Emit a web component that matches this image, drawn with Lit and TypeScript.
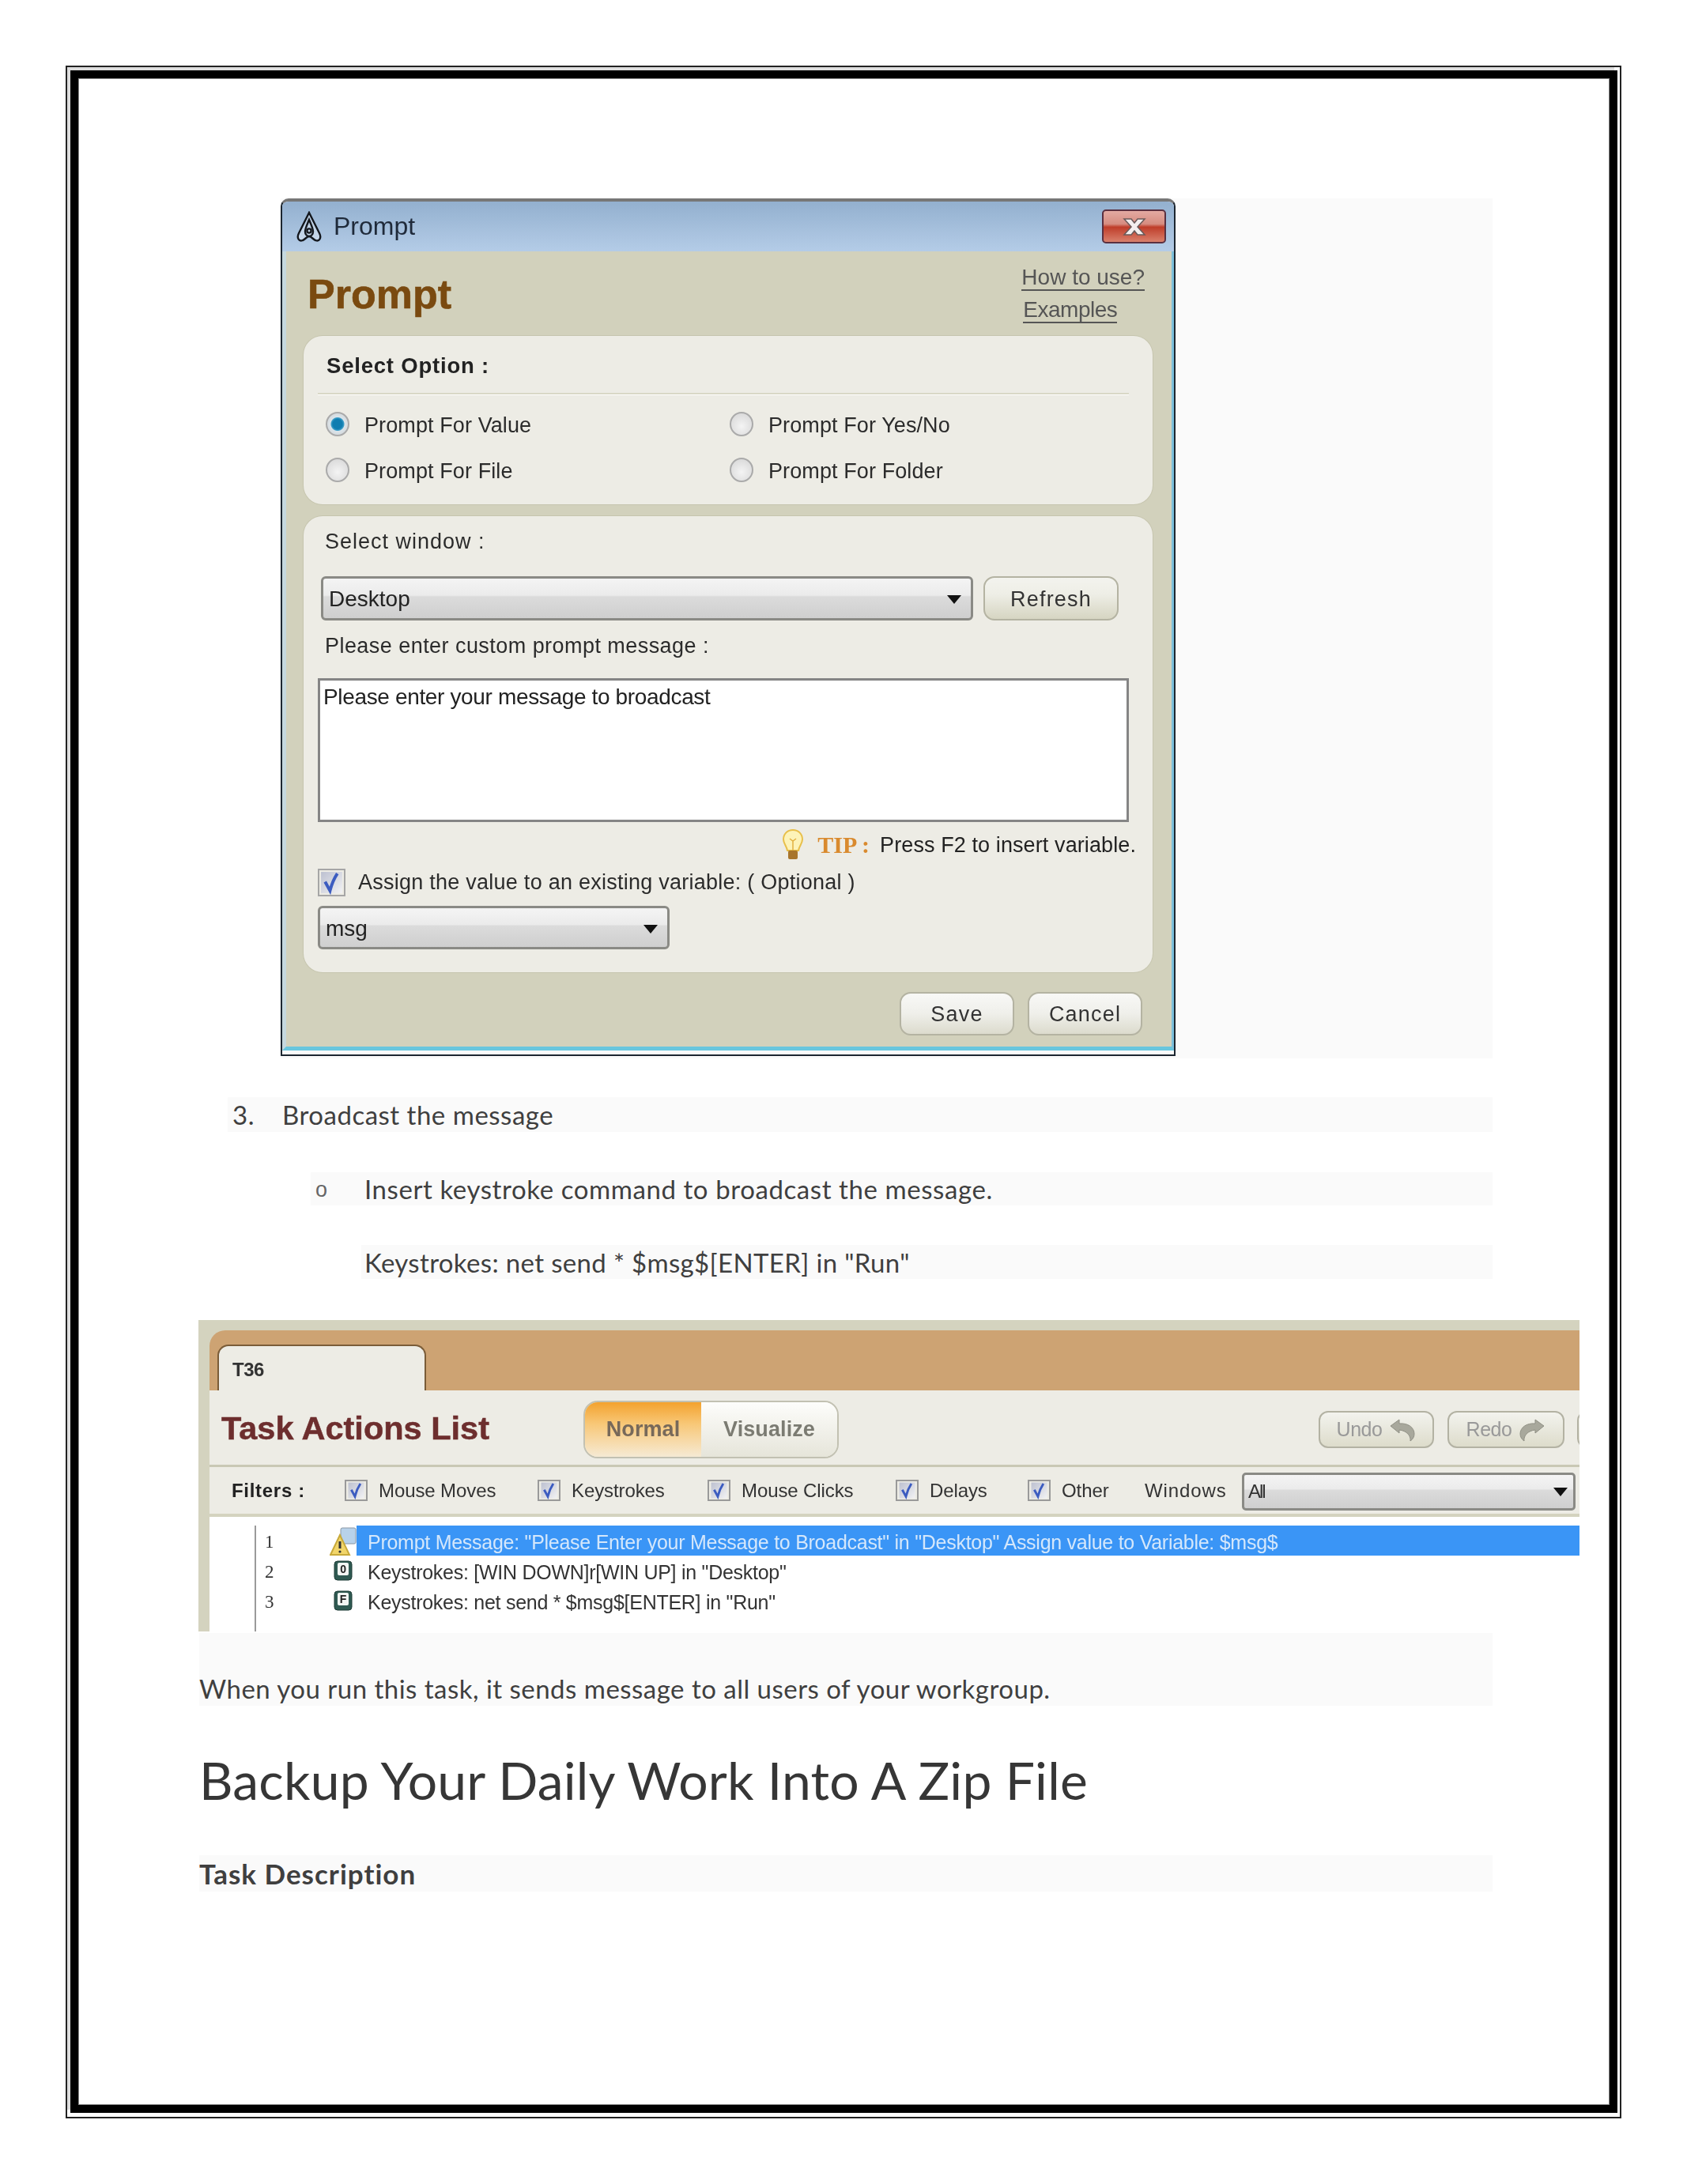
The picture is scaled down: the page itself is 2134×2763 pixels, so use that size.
import { LitElement, html, css, svg } from 'lit';
import { customElement } from 'lit/decorators.js';

const arrow = (cls = '') => html`<svg class="arrow ${cls}" width="18" height="12" viewBox="0 0 18 12"><path d="M0 1h18L9 12z" fill="#111"/></svg>`;

const checkMark = () => html`<svg class="check" width="100%" height="100%" viewBox="0 0 30 30">
  <defs><linearGradient id="cb" x1="0" y1="0" x2="1" y2="1"><stop offset="0" stop-color="#bcc0d0"/><stop offset="1" stop-color="#f2f2f4"/></linearGradient></defs>
  <rect x="2" y="2" width="26" height="26" fill="url(#cb)"/>
  <path d="M7 14l6 11c2-8 5-15 9-21" fill="none" stroke="#3c5cc0" stroke-width="3.8"/>
</svg>`;

@customElement('prompt-window')
class PromptWindow extends LitElement {
  static styles = css`
    :host { display: block; font-family: "Liberation Sans", Arial, sans-serif; color: #2b2b2b; filter: blur(0.55px); }
    .win { box-sizing: border-box; width: 1132px; height: 1085px; border: 2px solid #1c2630; border-top: 4px solid #777; border-radius: 10px 10px 0 0; overflow: hidden; }
    .titlebar { height: 63px; display: flex; align-items: center; background: linear-gradient(#93b0cf, #b4cce7); padding-left: 17px; font-size: 32px; color: #1f2a3a; }
    .titlebar svg.logo { margin-right: 14px; }
    .close { margin-left: auto; margin-right: 10px; width: 81px; height: 43px; box-sizing: border-box; border: 2px solid #5a3040; border-radius: 5px; background: linear-gradient(#e3aaa2 0%, #d68c80 42%, #bf3d2a 52%, #d9806c 100%); display: flex; align-items: center; justify-content: center; }
    .body { height: 1011px; box-sizing: border-box; background: #d2d1bc; border-left: 5px solid #c5d8de; border-right: 3px solid #7cc0dc; border-bottom: 5px solid #68c6de; }
    .head { height: 107px; display: flex; justify-content: space-between; padding: 0 34px 0 27px; box-sizing: border-box; }
    h1 { margin: 28px 0 0; font-size: 52px; line-height: 52px; font-weight: 700; color: #7a4a10; -webkit-text-stroke: 0.6px #7a4a10; }
    .links { padding-top: 18px; display: flex; flex-direction: column; align-items: flex-start; font-size: 28px; color: #555; }
    .links a { line-height: 30px; border-bottom: 2px solid #555; margin-bottom: 9px; }
    .links a.ex { margin-left: 2px; letter-spacing: -0.5px; }
    .panel { margin-left: 22px; width: 1074px; box-sizing: border-box; background: #edece5; border-radius: 24px; box-shadow: 0 0 0 1px #c6c5ae; }
    .p1 { height: 213px; }
    .p2 { height: 577px; margin-top: 15px; }
    .p1-title { height: 72px; box-sizing: border-box; padding: 20px 0 0 29px; font-size: 27.5px; line-height: 36px; font-weight: 700; letter-spacing: 0.8px; color: #222; }
    .sep { margin-left: 18px; width: 1026px; height: 2px; background: #d9d8c6; box-shadow: 0 1px 0 #fff; }
    .radios { display: grid; grid-template-columns: 511px 1fr; grid-auto-rows: 58px; padding: 8px 0 0 28px; }
    .radio { display: flex; align-items: center; font-size: 27px; letter-spacing: 0.1px; gap: 19px; }
    .radio span.t { padding-top: 5px; }
    .dot { width: 30px; height: 31px; border-radius: 50%; box-sizing: border-box; border: 2px solid #aaa; background: radial-gradient(circle at 50% 60%, #f4f4f4, #d4d4d4); }
    .dot.on { background: radial-gradient(circle, #0f7db0 0 6px, #3b9dc7 8px, #dbe4ea 9px, #cfcfcf 100%); }
    .lbl { height: 64px; display: flex; align-items: center; padding-left: 27px; font-size: 27px; }
    .lbl.sw { letter-spacing: 1px; margin-bottom: 12px; }
    .lbl.pm { letter-spacing: 0.45px; margin-bottom: 9px; }
    .sel-row { display: flex; padding-left: 22px; gap: 13px; height: 56px; }
    .select { box-sizing: border-box; border: 3px solid #8a8a85; border-radius: 6px; background: linear-gradient(#f4f4f4 0, #ebebeb 42%, #dbdbdb 46%, #cfcfcf 100%); display: flex; align-items: center; justify-content: space-between; padding: 2px 12px 0 7px; font-size: 28px; color: #222; }
    .sel-win { width: 825px; height: 56px; }
    .sel-msg { width: 445px; height: 55px; margin: 12px 0 0 18px; }
    .btn { box-sizing: border-box; border: 2px solid #b4b3a2; border-radius: 14px; display: flex; align-items: center; justify-content: center; padding-top: 2px; font-size: 27px; letter-spacing: 1.2px; color: #333; background: linear-gradient(#f3f3ee, #eeeee6 40%, #d6d5c2); }
    .refresh { width: 171px; height: 56px; }
    .text { margin-left: 18px; width: 1026px; height: 182px; box-sizing: border-box; background: #fff; border: 3px solid #858585; padding: 5px 4px; font-size: 28px; line-height: 32px; letter-spacing: -0.35px; color: #222; }
    .tip { height: 58px; display: flex; align-items: center; justify-content: flex-end; padding-right: 21px; font-size: 27px; letter-spacing: 0.1px; color: #222; }
    .tip b { color: #d98a2e; margin: 0 13px 0 18px; font-family: "Liberation Serif", serif; font-size: 30px; letter-spacing: 0; }
    .chk-row { display: flex; align-items: center; height: 35px; margin-left: 18px; gap: 16px; padding-top: 1px; font-size: 27px; letter-spacing: 0.25px; }
    .cb { width: 35px; height: 35px; box-sizing: border-box; border: 2px solid #a6a6a6; }
    .foot { display: flex; justify-content: flex-end; gap: 17px; padding: 25px 37px 0 0; }
    .foot .btn { width: 145px; height: 55px; background: linear-gradient(#f8f8f6, #efefea 50%, #dcdbcd); }
  `;

  radio(label: string, on = false) {
    return html`<div class="radio"><span class="dot ${on ? 'on' : ''}"></span><span class="t">${label}</span></div>`;
  }

  render() {
    return html`
      <div class="win">
        <div class="titlebar">
          <svg class="logo" width="34" height="40" viewBox="0 0 34 40" fill="none" stroke="#14181e" stroke-width="2.4">
            <path d="M17 2L4 28C1 34 4 39 9 37c3-1 5-5 8-5s5 4 8 5c5 2 8-3 5-9z" fill="#e4ebf3" fill-opacity="0.45"/>
            <path d="M17 11c-2 5-5 11-5 15 0 3 2 6 5 6s5-3 5-6c0-4-3-10-5-15z"/>
            <circle cx="17" cy="25" r="2.6"/>
          </svg>
          Prompt
          <div class="close">
            <svg width="34" height="26" viewBox="0 0 34 26"><path d="M4 3h9l4 5 4-5h9l-9 10 9 10h-9l-4-5-4 5H4l9-10z" fill="#f3eeee" stroke="#6a5a5a" stroke-width="1.5"/></svg>
          </div>
        </div>
        <div class="body">
          <div class="head">
            <h1>Prompt</h1>
            <div class="links"><a>How to use?</a><a class="ex">Examples</a></div>
          </div>
          <div class="panel p1">
            <div class="p1-title">Select Option :</div>
            <div class="sep"></div>
            <div class="radios">
              ${this.radio('Prompt For Value', true)}
              ${this.radio('Prompt For Yes/No')}
              ${this.radio('Prompt For File')}
              ${this.radio('Prompt For Folder')}
            </div>
          </div>
          <div class="panel p2">
            <div class="lbl sw">Select window :</div>
            <div class="sel-row">
              <div class="select sel-win">Desktop ${arrow()}</div>
              <div class="btn refresh">Refresh</div>
            </div>
            <div class="lbl pm">Please enter custom prompt message :</div>
            <div class="text">Please enter your message to broadcast</div>
            <div class="tip">
              <svg width="26" height="40" viewBox="0 0 26 40">
                <path d="M13 1C6 1 1 6 1 13c0 5 4 8 5 14h14c1-6 5-9 5-14 0-7-5-12-12-12z" fill="#fdf3b8" stroke="#e8bf4a" stroke-width="2"/>
                <path d="M13 27V14M9 12l4 3 4-3" fill="none" stroke="#e2b040" stroke-width="1.5"/>
                <rect x="7" y="27" width="12" height="11" rx="2" fill="#a8752c"/>
              </svg>
              <b>TIP :</b> Press F2 to insert variable.
            </div>
            <div class="chk-row"><span class="cb">${checkMark()}</span>Assign the value to an existing variable: ( Optional )</div>
            <div class="select sel-msg">msg ${arrow()}</div>
          </div>
          <div class="foot"><div class="btn">Save</div><div class="btn">Cancel</div></div>
        </div>
      </div>
    `;
  }
}

const filters = [
  { label: 'Mouse Moves', width: 244 },
  { label: 'Keystrokes', width: 215 },
  { label: 'Mouse Clicks', width: 238 },
  { label: 'Delays', width: 167 },
  { label: 'Other', width: 148 },
];

const rows = [
  { n: 1, text: 'Prompt Message: "Please Enter your Message to Broadcast" in "Desktop" Assign value to Variable: $msg$', sel: true },
  { n: 2, text: 'Keystrokes: [WIN DOWN]r[WIN UP] in "Desktop"', sel: false },
  { n: 3, text: 'Keystrokes: net send * $msg$[ENTER] in "Run"', sel: false },
];

@customElement('task-actions')
class TaskActions extends LitElement {
  static styles = css`
    :host { display: block; font-family: "Liberation Sans", Arial, sans-serif; color: #333; filter: blur(0.55px); }
    .shot { width: 1747px; height: 394px; box-sizing: border-box; background: #d4d3bf; padding: 13px 0 0 14px; overflow: hidden; }
    .tabs { height: 76px; box-sizing: border-box; background: #cda373; border-radius: 20px 0 0 0; padding: 18px 0 0 10px; }
    .tab { width: 264px; height: 58px; box-sizing: border-box; background: #edece5; border: 2px solid #7a5c38; border-bottom: 0; border-radius: 14px 14px 0 0; padding: 16px 0 0 17px; font-size: 24px; line-height: 28px; letter-spacing: -0.5px; font-weight: 700; color: #333; }
    .header { height: 97px; box-sizing: border-box; background: #edece5; border-bottom: 3px solid #c9c8b4; display: flex; align-items: center; padding-left: 15px; }
    h2 { margin: 2px 0 0; width: 458px; font-size: 41.5px; line-height: 48px; font-weight: 700; color: #6d2e2e; -webkit-text-stroke: 0.5px #6d2e2e; }
    .seg { width: 323px; height: 73px; margin-top: 5px; box-sizing: border-box; display: flex; border-radius: 18px; border: 2px solid #c2c1b2; overflow: hidden; font-weight: 700; font-size: 27px; letter-spacing: 0.1px; color: #7b7b72; }
    .seg div { display: flex; align-items: center; justify-content: center; }
    .seg .on { width: 147px; background: linear-gradient(#f3a22e, #f8c878 40%, #f6ead4); color: #77695a; }
    .seg .off { flex: 1; background: linear-gradient(#fdfdfb, #e6e5da); }
    .tool { box-sizing: border-box; height: 47px; margin-top: 5px; border: 2px solid #b3b2a3; border-radius: 12px; background: linear-gradient(#f3f3ee, #dddccb); display: flex; align-items: center; justify-content: center; gap: 9px; color: #999; font-size: 25px; letter-spacing: -0.5px; }
    .undo { width: 146px; margin-left: auto; }
    .redo { width: 148px; margin-left: 17px; }
    .stub { width: 20px; margin: 5px -17px 0 16px; border-radius: 12px 0 0 12px; }
    .filters { height: 63px; box-sizing: border-box; background: #edece5; border-bottom: 4px solid #d4d3bf; display: flex; align-items: center; padding-left: 28px; font-size: 24px; }
    .f-title { width: 143px; font-weight: 700; letter-spacing: 0.7px; color: #222; }
    .filter { display: flex; align-items: center; gap: 14px; letter-spacing: -0.1px; }
    .cb { width: 29px; height: 27px; box-sizing: border-box; border: 2px solid #9a9a9a; flex: none; }
    .win-lbl { width: 123px; letter-spacing: 0.9px; }
    .select { width: 422px; height: 48px; margin-top: 3px; box-sizing: border-box; border: 3px solid #8a8a85; border-radius: 5px; background: linear-gradient(#f4f4f4, #ebebeb 42%, #dbdbdb 46%, #cfcfcf); display: flex; align-items: center; justify-content: space-between; padding: 0 7px 0 5px; letter-spacing: -2px; }
    .list { height: 145px; background: #fff; box-sizing: border-box; padding: 11px 0 0 57px; }
    .rows { height: 134px; border-left: 2px solid #9a9a9a; }
    .row { display: flex; height: 38px; font-size: 25px; letter-spacing: -0.27px; }
    .num { width: 93px; padding: 8px 0 0 11px; box-sizing: border-box; font-family: "Liberation Serif", serif; font-size: 23px; letter-spacing: 0; color: #333; }
    .ico { width: 34px; display: flex; align-items: center; justify-content: center; }
    .txt { flex: 1; padding: 5px 0 0 14px; box-sizing: border-box; line-height: 32px; white-space: nowrap; }
    .sel { background: #3a95f6; color: #d4e7fb; }
  `;

  rowIcon(n: number) {
    if (n === 1) return html`<svg width="34" height="38" viewBox="0 0 34 38">
      <rect x="14" y="3" width="19" height="20" rx="2" fill="#b8d2ea" stroke="#8a97a5"/>
      <path d="M13 12L1 37h24z" fill="#f1d56a" stroke="#c8a93a" stroke-width="2"/>
      <path d="M13 20v9" stroke="#333" stroke-width="3"/><circle cx="13" cy="33" r="1.6" fill="#333"/></svg>`;
    return html`<svg width="24" height="26" viewBox="0 0 24 26">
      <rect x="1" y="1" width="22" height="24" rx="4" fill="#2f5a52" stroke="#1c3a35"/>
      <rect x="5" y="3" width="14" height="16" rx="2" fill="#f2f5f3"/>
      <text x="12" y="16" text-anchor="middle" font-size="14" font-weight="700" font-family="Liberation Sans" fill="#222">${n === 2 ? '0' : 'F'}</text></svg>`;
  }

  tool(d: string) {
    return svg`<svg width="34" height="30" viewBox="0 0 34 30"><path d="${d}" fill="#a8a89c" stroke="#8f8f84" stroke-width="1"/></svg>`;
  }

  render() {
    return html`
      <div class="shot">
        <div class="tabs"><div class="tab">T36</div></div>
        <div class="header">
          <h2>Task Actions List</h2>
          <div class="seg"><div class="on">Normal</div><div class="off">Visualize</div></div>
          <div class="tool undo">Undo ${this.tool('M2 10L13 2v5c11-1 19 5 19 13 0 4-2 7-5 9 1-7-5-13-14-14v4z')}</div>
          <div class="tool redo">Redo ${this.tool('M32 10L21 2v5C10 6 2 12 2 20c0 4 2 7 5 9-1-7 5-13 14-14v4z')}</div>
          <div class="tool stub"></div>
        </div>
        <div class="filters">
          <div class="f-title">Filters :</div>
          ${filters.map(f => html`<div class="filter" style="width:${f.width}px"><span class="cb">${checkMark()}</span>${f.label}</div>`)}
          <div class="win-lbl">Windows</div>
          <div class="select">All ${arrow()}</div>
        </div>
        <div class="list">
          <div class="rows">
            ${rows.map(r => html`<div class="row">
              <div class="num">${r.n}</div>
              <div class="ico">${this.rowIcon(r.n)}</div>
              <div class="txt ${r.sel ? 'sel' : ''}">${r.text}</div>
            </div>`)}
          </div>
        </div>
      </div>
    `;
  }
}

@customElement('app-root')
class AppRoot extends LitElement {
  static styles = css`
    :host { display: block; width: 2134px; height: 2763px; background: #fff; overflow: hidden; font-family: Lato, "Open Sans", sans-serif; color: #3f3f3f; }
    .outer { margin: 83px 0 0 83px; width: 1968px; height: 2597px; box-sizing: border-box; border: 2px solid #222; padding: 4px 3px 5px 4px; }
    .inner { height: 100%; box-sizing: border-box; border: 10px solid #000; box-shadow: -4px -4px 0 #ddd, inset 0 0 0 1px #888; padding: 152px 0 0 153px; }
    .doc { width: 1636px; }
    .img-band { margin-left: 103px; width: 1533px; height: 1088px; background: #fafafa; }
    .band { background: #fafafa; display: flex; align-items: center; font-size: 33px; letter-spacing: 0.5px; box-sizing: border-box; }
    .b1 { margin: 49px 0 0 36px; height: 44px; padding-left: 6px; }
    .b2 { margin: 51px 0 0 141px; height: 42px; padding-left: 6px; letter-spacing: 0.58px; }
    .b3 { margin: 50px 0 0 205px; height: 43px; padding-left: 4px; letter-spacing: 0.34px; }
    .mark { width: 63px; flex: none; }
    .b2 .mark { width: 62px; padding-top: 2px; font-family: "Liberation Sans", sans-serif; font-size: 27px; color: #666; }
    task-actions { margin: 52px 0 0 -1px; }
    .b4 { margin-top: 2px; height: 92px; padding-top: 48px; letter-spacing: 0.48px; }
    h1 { margin: 0; height: 80px; padding-top: 54px; font-size: 66px; line-height: 80px; font-weight: 400; color: #363636; letter-spacing: 0.2px; }
    .b5 { margin-top: 55px; height: 46px; font-size: 35px; letter-spacing: 1px; font-weight: 700; }
  `;

  render() {
    return html`
      <div class="outer">
        <div class="inner">
          <div class="doc">
            <div class="img-band"><prompt-window></prompt-window></div>
            <div class="band b1"><span class="mark">3.</span>Broadcast the message</div>
            <div class="band b2"><span class="mark">o</span>Insert keystroke command to broadcast the message.</div>
            <div class="band b3">Keystrokes: net send * $msg$[ENTER] in "Run"</div>
            <task-actions></task-actions>
            <div class="band b4">When you run this task, it sends message to all users of your workgroup.</div>
            <h1>Backup Your Daily Work Into A Zip File</h1>
            <div class="band b5">Task Description</div>
          </div>
        </div>
      </div>
    `;
  }
}
